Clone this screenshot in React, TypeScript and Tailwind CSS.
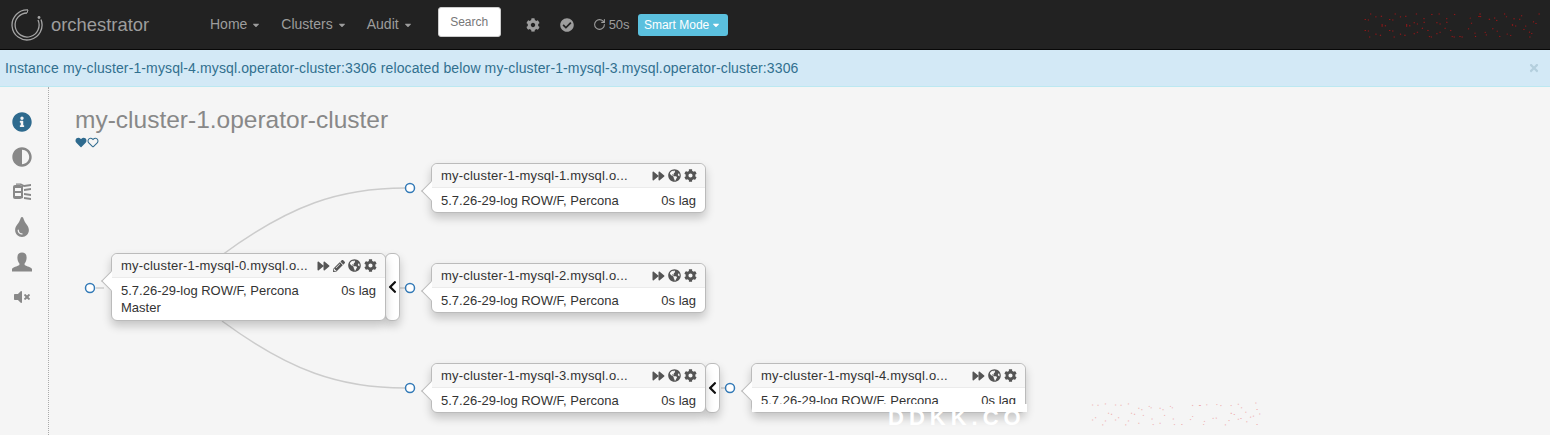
import { RotateCw } from "lucide-react";
import {
  FaAdjust,
  FaCaretDown,
  FaCheckCircle,
  FaChevronLeft,
  FaCog,
  FaForward,
  FaGlobeAmericas,
  FaHeart,
  FaInfoCircle,
  FaPencilAlt,
  FaRegHeart,
  FaTimes,
  FaTint,
  FaVolumeMute,
} from "react-icons/fa";

type NodeBoxProps = {
  name: string;
  className: string;
  master?: boolean;
  collapse?: boolean;
};

function NodeBox({ name, className, master, collapse }: NodeBoxProps) {
  return (
    <div className={`absolute flex ${className}`}>
      <div className="relative w-[275px] rounded-[6px] border border-[#bbb] bg-white text-[13px] leading-[18px] text-[#333] shadow-[0_5px_10px_rgba(0,0,0,0.2)]">
        <span className="absolute left-[-8px] top-[20px] h-[14px] w-[14px] rotate-45 border-b border-l border-[#bbb] bg-white" />
        <div className="relative flex h-[24px] items-center justify-between rounded-t-[6px] border-b border-[#ebebeb] bg-[#f7f7f7] pl-[9px] pr-[8px]">
          <span className="tracking-[0.2px]">{name}</span>
          <span className="flex items-center gap-[3px] text-[#555]">
            <FaForward className="h-[12px] w-[13px]" />
            {master && <FaPencilAlt className="h-[12px] w-[12px]" />}
            <FaGlobeAmericas className="h-[13px] w-[13px]" />
            <FaCog className="h-[13px] w-[13px]" />
          </span>
        </div>
        <div className="relative px-[9px] pt-[4px]">
          <div className="flex justify-between">
            <span>5.7.26-29-log ROW/F, Percona</span>
            <span>0s lag</span>
          </div>
          {master && <div className="mt-[-1px]">Master</div>}
        </div>
      </div>
      {collapse && (
        <div className="ml-[-1px] flex w-[15px] items-center justify-center rounded-[6px] border border-[#bbb] bg-white shadow-[0_5px_10px_rgba(0,0,0,0.2)]">
          <FaChevronLeft className="h-[14px] w-[11px] text-[#111]" />
        </div>
      )}
    </div>
  );
}

function Logo() {
  return (
    <svg width="34" height="34" viewBox="0 0 34 34" className="text-[#a5a5a5]" fill="none" stroke="currentColor">
      <path d="M18 2 A15 15 0 1 0 31 11.500" strokeWidth="1.300" />
      <path d="M17 5 A12 12 0 1 0 28 12" strokeWidth="1.300" />
      <path d="M18 2 L17 5" strokeWidth="1" />
      <circle cx="29" cy="9.500" r="1.400" fill="currentColor" stroke="none" />
    </svg>
  );
}

function ColumnsIcon() {
  return (
    <svg width="20" height="20" viewBox="0 0 20 20" fill="#888">
      <path d="M3 3 Q1 3 1 5 V15 Q1 17 3 17 H8 L11 16 V4 L8 3 Z" />
      <path d="M3 6 H9 V9 H3 Z M3 11 H9 V14 H3 Z" fill="#f5f5f5" />
      <path d="M4 1.500 H9 L12 3 L19 2 V4 L12 5 L8 2.800 H4 Z" />
      <path d="M12 7 L19 6 V8 L12 9 Z M12 11 L19 12 V14 L12 13 Z M12 15 L19 16 V18 L12 17 Z" />
    </svg>
  );
}

function UserIcon() {
  return (
    <svg width="20" height="20" viewBox="0 0 20 20" fill="#888">
      <path d="M10 0.500 C13.500 0.500 14.800 3 14.600 6 C14.500 8.500 13.600 10.500 12.600 11.600 V13 C15 14.500 19 15 20 17 V19.500 H0 V17 C1 15 5 14.500 7.400 13 V11.600 C6.400 10.500 5.500 8.500 5.400 6 C5.200 3 6.500 0.500 10 0.500 Z" />
    </svg>
  );
}

type DottedMarkProps = {
  className: string;
  color: string;
  size: number;
  text: string;
  gap: number;
};

// the faint stamped watermark: real text, stroked with a dotted line
function DottedMark({ className, color, size, text, gap }: DottedMarkProps) {
  return (
    <svg className={`pointer-events-none absolute ${className}`} fill="none">
      <text
        x="0"
        y={size * 0.85}
        fontFamily="'Liberation Sans', sans-serif"
        fontSize={size}
        stroke={color}
        strokeWidth="1"
        strokeDasharray={`1 ${gap}`}
      >
        {text}
      </text>
    </svg>
  );
}

export default function App() {
  return (
    <div className="relative h-[435px] w-[1550px] overflow-hidden bg-[#f5f5f5] font-['Liberation_Sans',sans-serif] text-[14px]">
      <nav className="relative flex h-[50px] items-center border-b border-[#080808] bg-[#222] text-[#9d9d9d]">
        <div className="ml-[10px] flex w-[200px] items-center gap-[7px]">
          <Logo />
          <span className="text-[18.4px]">orchestrator</span>
        </div>
        <div className="flex items-center gap-[20px]">
          <span className="flex items-center gap-[4px]">
            Home <FaCaretDown className="h-[10px] w-[10px]" />
          </span>
          <span className="flex items-center gap-[4px]">
            Clusters <FaCaretDown className="h-[10px] w-[10px]" />
          </span>
          <span className="flex items-center gap-[4px]">
            Audit <FaCaretDown className="h-[10px] w-[10px]" />
          </span>
        </div>
        <div className="ml-[25px] mt-[-6px] flex h-[30px] w-[63px] items-center justify-center rounded-[3px] border border-[#ccc] bg-white text-[12px] text-[#777]">
          Search
        </div>
        <FaCog className="ml-[25px] h-[14px] w-[14px]" />
        <FaCheckCircle className="ml-[20px] h-[14px] w-[14px]" />
        <RotateCw className="ml-[19px] h-[13px] w-[13px]" strokeWidth={2} />
        <span className="ml-[3px] text-[13px]">50s</span>
        <div className="ml-[8px] flex h-[22px] w-[90px] items-center justify-center gap-[2px] rounded-[3px] bg-[#5bc0de] text-[12px] text-white">
          Smart Mode <FaCaretDown className="h-[10px] w-[10px]" />
        </div>
        <DottedMark className="left-[1362px] top-[8px] h-[40px] w-[186px]" color="#b01010" size={34} text="DDKK.COV" gap={10} />
      </nav>

      <div className="flex h-[37px] items-center justify-between border-b border-[#bce8f1] bg-[#d3e9f6] pl-[5px] pr-[10px] tracking-[0.12px] text-[#31708f]">
        <span>Instance my-cluster-1-mysql-4.mysql.operator-cluster:3306 relocated below my-cluster-1-mysql-3.mysql.operator-cluster:3306</span>
        <FaTimes className="h-[12px] w-[12px] text-[#b4cfdd]" />
      </div>

      <div className="relative flex h-[348px]">
        <aside className="flex w-[49px] flex-col items-center gap-[15px] border-r border-dotted border-[#aaa] pr-[5px] pt-[25px] text-[#888]">
          <FaInfoCircle className="h-[20px] w-[20px] text-[#2e6a8e]" />
          <FaAdjust className="h-[20px] w-[20px]" />
          <ColumnsIcon />
          <FaTint className="h-[20px] w-[16px]" />
          <UserIcon />
          <FaVolumeMute className="mt-[2px] h-[16px] w-[20px]" />
        </aside>
        <div className="ml-[26px] pt-[19px]">
          <h1 className="text-[24.5px] leading-[28px] text-[#888]">my-cluster-1.operator-cluster</h1>
          <div className="mt-[3px] flex text-[#2e6a8e]">
            <FaHeart className="h-[11px] w-[12px]" />
            <FaRegHeart className="h-[11px] w-[12px]" />
          </div>
        </div>
      </div>

      <svg className="pointer-events-none absolute left-0 top-0 h-[435px] w-[1550px]" fill="none" stroke="#ccc" strokeWidth="1.500">
        <path d="M222 255 C290 205 340 188 405 188" />
        <path d="M222 321 C290 371 340 388 405 388" />
        <path d="M400 288 H405" />
        <path d="M96 288 H104" />
        <path d="M721 388 H725" />
      </svg>

      {[
        [90, 288],
        [410, 188],
        [410, 288],
        [410, 388],
        [730, 388],
      ].map(([x, y]) => (
        <svg key={`${x}-${y}`} className="absolute" style={{ left: x - 6, top: y - 6 }} width="12" height="12">
          <circle cx="6" cy="6" r="4.500" fill="white" stroke="#337ab7" strokeWidth="1.500" />
        </svg>
      ))}

      <NodeBox name="my-cluster-1-mysql-0.mysql.o..." className="left-[111px] top-[253px] h-[68px]" master collapse />
      <NodeBox name="my-cluster-1-mysql-1.mysql.o..." className="left-[431px] top-[163px] h-[50px]" />
      <NodeBox name="my-cluster-1-mysql-2.mysql.o..." className="left-[431px] top-[263px] h-[50px]" />
      <NodeBox name="my-cluster-1-mysql-3.mysql.o..." className="left-[431px] top-[363px] h-[50px]" collapse />
      <NodeBox name="my-cluster-1-mysql-4.mysql.o..." className="left-[751px] top-[363px] h-[50px]" />

      <div className="absolute left-[752px] top-[404px] h-[8px] w-[275px] bg-white" />
      <div className="pointer-events-none absolute left-[888px] top-[410px] text-[22px] font-bold leading-[16px] tracking-[5px] text-white">
        DDKK.CO
      </div>
      <DottedMark className="left-[1090px] top-[398px] h-[37px] w-[190px]" color="#eaa" size={32} text="DDKK.COM" gap={14} />
    </div>
  );
}
